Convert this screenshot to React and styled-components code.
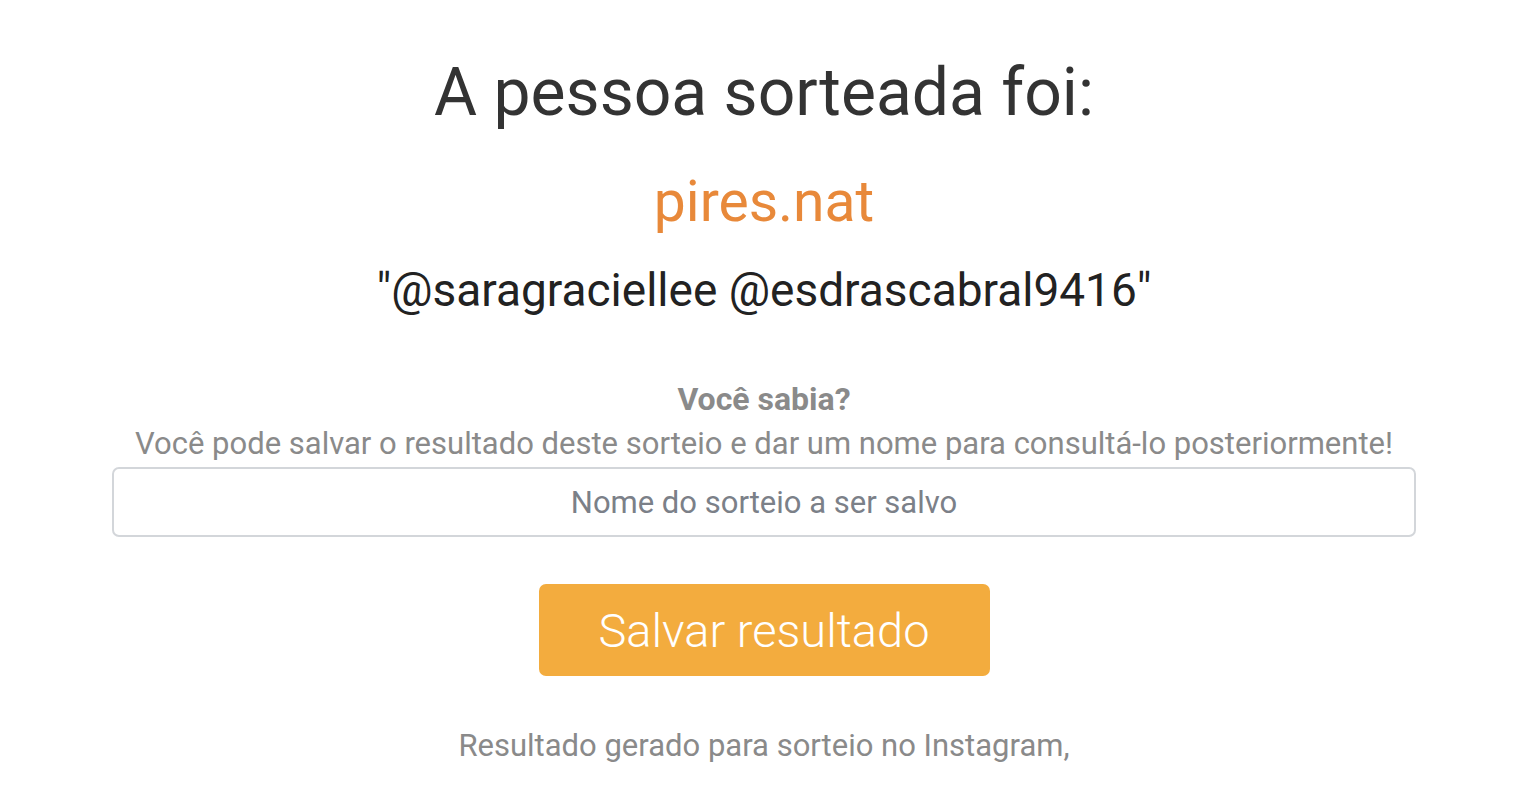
import React from 'react';
import styled, { createGlobalStyle } from 'styled-components';

const GlobalStyle = createGlobalStyle`
  html, body {
    margin: 0;
    padding: 0;
    background: #FFFFFF;
    font-family: Roboto, "Liberation Sans", Arial, sans-serif;
  }
`;

const Page = styled.main`
  box-sizing: border-box;
  width: 1536px;
  height: 800px;
  overflow: hidden;
  padding: 53px 120px 0 112px;
  display: flex;
  flex-direction: column;
  align-items: center;
  text-align: center;
`;

const Title = styled.h1`
  margin: 0;
  font-size: 66px;
  font-weight: 400;
  line-height: 80px;
  color: #333333;
`;

const Winner = styled.div`
  margin-top: 37px;
  font-size: 57px;
  line-height: 64px;
  color: #E8893A;
`;

const Comment = styled.div`
  margin-top: 30px;
  font-size: 46px;
  line-height: 52px;
  color: #222222;
`;

const TipTitle = styled.div`
  margin-top: 63px;
  font-size: 32px;
  font-weight: 700;
  line-height: 40px;
  color: #8A8A8A;
`;

const TipText = styled.div`
  margin-top: 3px;
  font-size: 31px;
  line-height: 44px;
  color: #8A8A8A;
`;

const NameInput = styled.input`
  box-sizing: border-box;
  width: 100%;
  height: 70px;
  margin-top: 1px;
  border: 2px solid #D3D6DA;
  border-radius: 7px;
  background: #FFFFFF;
  font-family: inherit;
  font-size: 31px;
  text-align: center;
  color: #495057;

  &::placeholder {
    color: #7B8088;
  }

  &:focus {
    outline: none;
  }
`;

const SaveButton = styled.button`
  margin-top: 47px;
  width: 451px;
  height: 92px;
  border: none;
  border-radius: 7px;
  background: #F3AC3E;
  color: #FFFFFF;
  font-family: inherit;
  font-size: 47px;
  font-weight: 300;
  cursor: pointer;
`;

const Footer = styled.div`
  margin-top: 52px;
  font-size: 31px;
  line-height: 36px;
  color: #8A8A8A;
`;

const App = () => (
  <Page>
    <GlobalStyle />
    <Title>A pessoa sorteada foi:</Title>
    <Winner>pires.nat</Winner>
    <Comment>"@saragraciellee @esdrascabral9416"</Comment>
    <TipTitle>Você sabia?</TipTitle>
    <TipText>Você pode salvar o resultado deste sorteio e dar um nome para consultá-lo posteriormente!</TipText>
    <NameInput placeholder="Nome do sorteio a ser salvo" />
    <SaveButton type="button">Salvar resultado</SaveButton>
    <Footer>Resultado gerado para sorteio no Instagram,</Footer>
  </Page>
);

export default App;
